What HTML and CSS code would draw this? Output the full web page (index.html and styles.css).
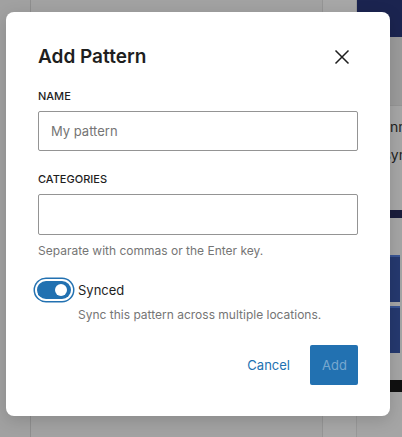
FILE: index.html
```html
<!DOCTYPE html>
<html lang="en">
<head>
    <meta charset="UTF-8">
    <meta name="viewport" content="width=device-width, initial-scale=1.0">
    <title>Add Pattern</title>
    <link rel="stylesheet" href="styles.css">
</head>
<body>

    <!-- Editor behind the modal -->
    <div class="editor">
        <div class="editor-side"></div>
        <div class="editor-canvas"></div>
        <div class="editor-gutter"></div>
        <div class="editor-panel">
            <div class="panel-image panel-image-top"><span>Some text</span></div>
            <div class="panel-block"></div>
            <div class="panel-text">
                <p>Bann</p>
                <p>Usyn</p>
            </div>
            <div class="panel-band"></div>
            <div class="panel-gap"></div>
            <div class="panel-image panel-wave"></div>
            <div class="panel-image panel-wave"></div>
            <div class="panel-gap-sm"></div>
            <div class="panel-black"></div>
        </div>
    </div>

    <!-- Add Pattern modal -->
    <div class="modal">
        <div class="modal-header">
            <h1>Add Pattern</h1>
            <button class="close-btn" aria-label="Close">
                <svg width="24" height="24" viewBox="0 0 24 24"><path d="M5.5 5.5 18.5 18.5M18.5 5.5 5.5 18.5" stroke="#1e1e1e" stroke-width="1.5" fill="none"/></svg>
            </button>
        </div>

        <div class="field">
            <label for="name">Name</label>
            <input type="text" id="name" placeholder="My pattern">
        </div>

        <div class="field">
            <label for="categories">Categories</label>
            <input type="text" id="categories" class="tokens">
            <p class="help">Separate with commas or the Enter key.</p>
        </div>

        <div class="toggle-row">
            <span class="toggle"><span class="toggle-thumb"></span></span>
            <span class="toggle-label">Synced</span>
        </div>
        <p class="help toggle-help">Sync this pattern across multiple locations.</p>

        <div class="actions">
            <button class="btn-cancel">Cancel</button>
            <button class="btn-add" disabled>Add</button>
        </div>
    </div>

</body>
</html>
```

FILE: styles.css
```css
body {
    margin: 0;
    width: 402px;
    height: 437px;
    overflow: hidden;
    position: relative;
    font-family: 'Inter', 'Liberation Sans', sans-serif;
    background: #a0a0a0;
}

/* Editor (dimmed) */
.editor {
    display: flex;
    height: 437px;
}

.editor-side {
    width: 30px;
    border-right: 1px solid #8e8e8e;
    background: #a1a1a1;
}

.editor-canvas {
    width: 291px;
    border-right: 1px solid #959595;
    background: #a2a2a2;
}

.editor-gutter {
    width: 33px;
    border-right: 1px solid #989898;
    background: #a7a7a7;
}

.editor-panel {
    flex: 1;
    display: flex;
    flex-direction: column;
    overflow: hidden;
    background: #a5a5a5;
}

.panel-image {
    background: #1b2450;
}

.panel-image-top {
    height: 37px;
    padding: 3px 0 0 5px;
    box-sizing: border-box;
}

.panel-image-top span {
    font-size: 5px;
    color: #e0e0e0;
}

.panel-block {
    height: 68px;
    background: #9b9b9b;
    border-bottom: 1px solid #959595;
}

.panel-text {
    height: 104px;
    padding: 12px 0 0 16px;
    box-sizing: border-box;
    background: #a6a6a6;
}

.panel-text p {
    margin: 0 0 10px;
    font-size: 14px;
    line-height: 18px;
    color: #1e1e1e;
    white-space: nowrap;
}

.panel-band {
    height: 8px;
    background: #1a1d3c;
}

.panel-gap {
    height: 37px;
}

.panel-wave {
    height: 45px;
    margin: 0 2px 4px 0;
    background: #25396f;
    border-top: 2px solid #3a5594;
}

.panel-gap-sm {
    height: 23px;
}

.panel-black {
    height: 12px;
    background: #101010;
}

/* Modal */
.modal {
    position: absolute;
    left: 6px;
    top: 12px;
    width: 384px;
    height: 404px;
    box-sizing: border-box;
    padding: 33px 32px 0;
    background: #ffffff;
    border-radius: 8px;
    box-shadow: 0 4px 16px rgba(0, 0, 0, 0.15);
    color: #1e1e1e;
}

.modal-header {
    display: flex;
    justify-content: space-between;
    align-items: center;
    height: 24px;
    margin-bottom: 19px;
}

.modal-header h1 {
    margin: 0;
    font-size: 19px;
    font-weight: 600;
    line-height: 24px;
}

.close-btn {
    width: 24px;
    height: 24px;
    padding: 0;
    margin-right: 4px;
    border: none;
    background: none;
}

.field {
    margin-bottom: 20px;
}

.field label {
    display: block;
    font-size: 11px;
    font-weight: 500;
    line-height: 16px;
    text-transform: uppercase;
    margin-bottom: 7px;
}

.field input {
    display: block;
    width: 100%;
    height: 40px;
    box-sizing: border-box;
    padding: 0 12px;
    border: 1px solid #949494;
    border-radius: 2px;
    font-family: inherit;
    font-size: 13px;
    color: #1e1e1e;
}

.field input::placeholder {
    color: #757575;
}

.field input.tokens {
    height: 41px;
}

.help {
    margin: 8px 0 0;
    font-size: 12px;
    line-height: 16px;
    color: #757575;
}

.toggle-row {
    display: flex;
    align-items: center;
    gap: 7px;
    margin-top: 1px;
    height: 22px;
}

.toggle {
    position: relative;
    width: 34px;
    height: 18px;
    margin-left: -1px;
    box-sizing: border-box;
    border-radius: 9px;
    background: #2271b1;
    box-shadow: 0 0 0 2px #ffffff, 0 0 0 3.5px #2271b1;
}

.toggle-thumb {
    position: absolute;
    right: 4px;
    top: 3px;
    width: 12px;
    height: 12px;
    border-radius: 50%;
    background: #ffffff;
}

.toggle-label {
    font-size: 13px;
    line-height: 16px;
}

.toggle-help {
    margin: 6px 0 0 40px;
}

.actions {
    display: flex;
    justify-content: flex-end;
    gap: 8px;
    margin-top: 22px;
}

.actions button {
    height: 40px;
    padding: 0 12px;
    border: none;
    border-radius: 2px;
    font-family: inherit;
    font-size: 13px;
}

.btn-cancel {
    background: none;
    color: #2271b1;
}

.btn-add {
    width: 48px;
    background: #2271b1;
    color: rgba(255, 255, 255, 0.4);
}
```
